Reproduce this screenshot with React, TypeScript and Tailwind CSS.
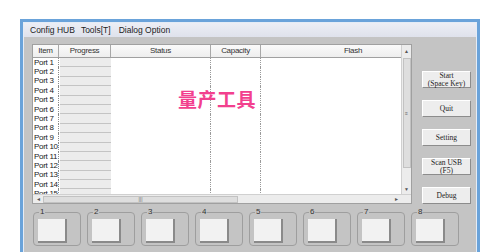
import React from "react";

const rows = Array.from({ length: 15 }, (_, i) => `Port ${i + 1}`);
const buttons: string[][] = [["Start", "(Space Key)"], ["Quit"], ["Setting"], ["Scan USB", "(F5)"], ["Debug"]];

export default function App() {
  return (
    <div className="w-[500px] h-[252px] bg-white overflow-hidden" style={{ fontFamily: '"Liberation Sans", Arial, sans-serif' }}>
      <div className="ml-[20px] mt-[19px] w-[460px] h-[240px] border-[3px] border-b-0 border-[#6aa3da]">
        <div className="h-full border border-b-0 border-[#e4ecf6] flex flex-col">
          {/* menu bar */}
          <div className="h-[14px] bg-gradient-to-b from-[#eceef5] to-[#dfe2ec] flex items-center pl-[6px] gap-[6px] text-[8.5px] text-[#222] leading-none">
            <span>Config HUB</span>
            <span>Tools[T]</span>
            <span className="ml-[2px]">Dialog Option</span>
          </div>
          {/* body */}
          <div className="flex-1 bg-[#c4c4c4] flex flex-col">
            <div className="flex pt-[7px] pl-[8px]">
              {/* table */}
              <div className="relative w-[380px] h-[160px] bg-white border border-[#a0a0a0] flex flex-col overflow-hidden">
                <div className="flex flex-1 min-h-0">
                  <div className="w-[369px] flex flex-col">
                    {/* header */}
                    <div className="h-[13px] flex bg-gradient-to-b from-[#fafafa] to-[#eeeeee] border-b border-[#a0a0a0] text-[8px] tracking-[-0.3px] text-[#333] leading-none">
                      <div className="w-[26px] flex items-center justify-center border-r border-[#a8a8a8]">Item</div>
                      <div className="w-[52px] flex items-center justify-center border-r border-[#a8a8a8]">Progress</div>
                      <div className="w-[100px] flex items-center justify-center border-r border-[#a8a8a8]">Status</div>
                      <div className="w-[50px] flex items-center justify-center border-r border-[#a8a8a8]">Capacity</div>
                      <div className="flex-1 flex items-center justify-center pl-[44px]">Flash</div>
                    </div>
                    {/* rows */}
                    <div className="flex-1 overflow-hidden">
                      {rows.map((r) => (
                        <div key={r} className="h-[9.4px] flex text-[8px] tracking-[-0.3px] text-[#222] leading-none">
                          <div className="w-[26px] flex items-center pl-[1px] border-r border-dotted border-[#8a8a8a]">{r}</div>
                          <div className="w-[52px] pl-[1px]">
                            <div className="h-full bg-[#ececec] border-b border-[#c4c4c4]" />
                          </div>
                          <div className="w-[100px] border-r border-dotted border-[#9a9a9a]" />
                          <div className="w-[50px] border-r border-dotted border-[#9a9a9a]" />
                          <div className="flex-1" />
                        </div>
                      ))}
                    </div>
                  </div>
                  {/* vertical scrollbar */}
                  <div className="w-[10px] bg-[#ececec] border-l border-[#d0d0d0] flex flex-col items-center">
                    <div className="h-[13px] flex items-center justify-center text-[5px] text-[#555] leading-none">▲</div>
                    <div className="w-[8px] h-[110px] bg-[#dedede] border border-[#c2c2c2] flex items-center justify-center text-[5px] text-[#666] leading-none">≡</div>
                    <div className="flex-1" />
                    <div className="h-[10px] flex items-center justify-center text-[5px] text-[#555] leading-none">▼</div>
                  </div>
                </div>
                {/* horizontal scrollbar */}
                <div className="h-[9px] flex items-center bg-[#ececec] border-t border-[#d0d0d0] text-[6px] text-[#555] leading-none">
                  <div className="w-[10px] flex justify-center">◂</div>
                  <div className="w-[195px] h-[7px] bg-[#dedede] border border-[#c2c2c2] flex items-center justify-center text-[5px] text-[#666]">|||</div>
                  <div className="flex-1" />
                  <div className="w-[10px] flex justify-center">▸</div>
                  <div className="w-[10px]" />
                </div>
                {/* overlay text */}
                <div
                  className="absolute left-[145px] top-[44px] text-[19px] font-bold text-[#f2408e] leading-none tracking-[0.5px]"
                  style={{ fontFamily: '"Noto Sans CJK SC", sans-serif' }}
                >
                  量产工具
                </div>
              </div>
              {/* buttons */}
              <div className="ml-[10px] pt-[27px] flex flex-col gap-[12px]">
                {buttons.map((b) => (
                  <div
                    key={b[0]}
                    className="w-[49px] h-[17px] bg-[#ededed] border border-t-white border-l-white border-r-[#8c8c8c] border-b-[#8c8c8c] flex flex-col items-center justify-center text-[7.5px] text-[#222] leading-[7.5px]"
                    style={{ fontFamily: '"Liberation Serif", "Times New Roman", serif' }}
                  >
                    {b.map((t) => (
                      <span key={t}>{t}</span>
                    ))}
                  </div>
                ))}
              </div>
            </div>
            {/* bottom groups */}
            <div className="flex gap-[6px] pl-[9px] pt-[8px]">
              {[1, 2, 3, 4, 5, 6, 7, 8].map((n) => (
                <div key={n} className="relative w-[48px] h-[34px] border border-[#9e9e9e] rounded-[4px] pl-[4px] pt-[6px]">
                  <span className="absolute left-[5px] top-[-6px] px-[1px] bg-[#c4c4c4] text-[8px] text-[#333] leading-[10px]">{n}</span>
                  <div className="w-[29px] h-[24px] bg-[#f2f2f2] border-r-2 border-b-2 border-[#8a8a8a]" />
                </div>
              ))}
            </div>
          </div>
        </div>
      </div>
    </div>
  );
}
